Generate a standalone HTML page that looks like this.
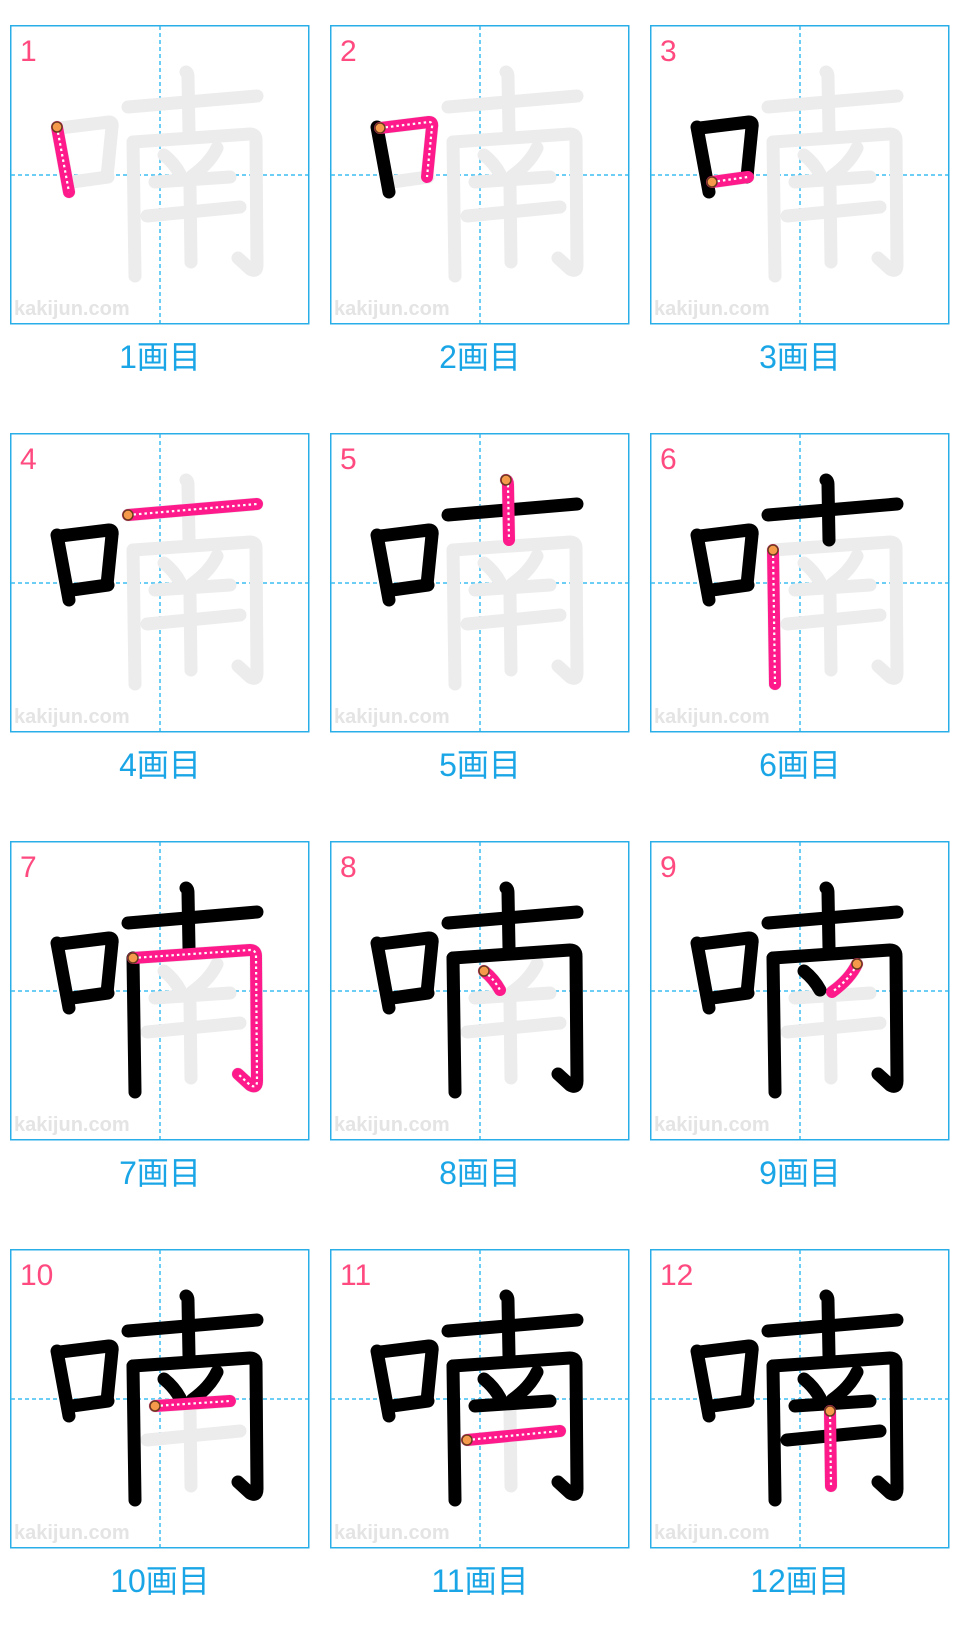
<!DOCTYPE html>
<html><head><meta charset="utf-8"><style>
html,body{margin:0;padding:0;background:#fff;width:960px;height:1632px;overflow:hidden}
svg{display:block}
.num{font-family:"Liberation Sans",sans-serif;font-size:30px;fill:#ff4a80}
.wm{font-family:"Liberation Sans",sans-serif;font-size:20px;fill:#e4e4e4;font-weight:bold}
.lab{font-family:"Liberation Sans","Noto Sans CJK JP",sans-serif;font-size:32px;fill:#1aa6e6}
</style></head><body>
<svg width="960" height="1632" viewBox="0 0 960 1632" xmlns="http://www.w3.org/2000/svg">
<defs>
<path id="s1" d="M47 102 L59 167"/>
<path id="s2" d="M50 103 L99 97 Q103 97 102 102 L97 152"/>
<path id="s3" d="M62 157 L98 152"/>
<path id="s4" d="M118 82 L247 71"/>
<path id="s5" d="M176 47 Q178 48 178 52 L179 107"/>
<path id="s6" d="M123 117 L125 251"/>
<path id="s7" d="M123 117 L240 109 Q246 109 246 115 L247 240 Q247 248 240 244 L228 233"/>
<path id="s8" d="M154 130 Q164 138 170 149"/>
<path id="s9" d="M207 123 Q200 138 182 151"/>
<path id="s10" d="M145 157 L220 152"/>
<path id="s11" d="M137 191 L230 182"/>
<path id="s12" d="M180 162 L181 237"/>
<g id="grid">
<rect x="0.75" y="0.75" width="298" height="298" fill="#fff" stroke="#2aaee8" stroke-width="1.5"/>
<line x1="150" y1="1" x2="150" y2="298" stroke="#3cbef0" stroke-width="1.5" stroke-dasharray="4,3"/>
<line x1="1" y1="150" x2="298" y2="150" stroke="#3cbef0" stroke-width="1.5" stroke-dasharray="4,3"/>
<text class="wm" x="4" y="290">kakijun.com</text>
</g>
<g id="gray" fill="none" stroke="#ececec" stroke-width="13" stroke-linecap="round" stroke-linejoin="round">
<use href="#s1"/><use href="#s2"/><use href="#s3"/><use href="#s4"/><use href="#s5"/><use href="#s6"/><use href="#s7"/><use href="#s8"/><use href="#s9"/><use href="#s10"/><use href="#s11"/><use href="#s12"/>
</g>
</defs>
<style>
.b{fill:none;stroke:#000;stroke-width:13;stroke-linecap:round;stroke-linejoin:round}
.p{fill:none;stroke:#ff1a8c;stroke-width:12;stroke-linecap:round;stroke-linejoin:round}
.d{fill:none;stroke:#fff;stroke-width:2.2;stroke-dasharray:2.5,3}
.o{fill:#f59a4a;stroke:#6a3a20;stroke-width:1.5}
</style>

<g transform="translate(10,25)"><use href="#grid"/><use href="#gray"/><text class="num" x="10" y="36">1</text>
<use href="#s1" class="p"/><use href="#s1" class="d"/><circle class="o" cx="47" cy="102" r="5"/></g>
<text class="lab" x="160" y="368" text-anchor="middle">1画目</text>
<g transform="translate(330,25)"><use href="#grid"/><use href="#gray"/><text class="num" x="10" y="36">2</text>
<use href="#s1" class="b"/>
<use href="#s2" class="p"/><use href="#s2" class="d"/><circle class="o" cx="50" cy="103" r="5"/></g>
<text class="lab" x="480" y="368" text-anchor="middle">2画目</text>
<g transform="translate(650,25)"><use href="#grid"/><use href="#gray"/><text class="num" x="10" y="36">3</text>
<use href="#s1" class="b"/><use href="#s2" class="b"/>
<use href="#s3" class="p"/><use href="#s3" class="d"/><circle class="o" cx="62" cy="157" r="5"/></g>
<text class="lab" x="800" y="368" text-anchor="middle">3画目</text>

<g transform="translate(10,433)"><use href="#grid"/><use href="#gray"/><text class="num" x="10" y="36">4</text>
<use href="#s1" class="b"/><use href="#s2" class="b"/><use href="#s3" class="b"/>
<use href="#s4" class="p"/><use href="#s4" class="d"/><circle class="o" cx="118" cy="82" r="5"/></g>
<text class="lab" x="160" y="776" text-anchor="middle">4画目</text>
<g transform="translate(330,433)"><use href="#grid"/><use href="#gray"/><text class="num" x="10" y="36">5</text>
<use href="#s1" class="b"/><use href="#s2" class="b"/><use href="#s3" class="b"/><use href="#s4" class="b"/>
<use href="#s5" class="p"/><use href="#s5" class="d"/><circle class="o" cx="176" cy="47" r="5"/></g>
<text class="lab" x="480" y="776" text-anchor="middle">5画目</text>
<g transform="translate(650,433)"><use href="#grid"/><use href="#gray"/><text class="num" x="10" y="36">6</text>
<use href="#s1" class="b"/><use href="#s2" class="b"/><use href="#s3" class="b"/><use href="#s4" class="b"/><use href="#s5" class="b"/>
<use href="#s6" class="p"/><use href="#s6" class="d"/><circle class="o" cx="123" cy="117" r="5"/></g>
<text class="lab" x="800" y="776" text-anchor="middle">6画目</text>

<g transform="translate(10,841)"><use href="#grid"/><use href="#gray"/><text class="num" x="10" y="36">7</text>
<use href="#s1" class="b"/><use href="#s2" class="b"/><use href="#s3" class="b"/><use href="#s4" class="b"/><use href="#s5" class="b"/><use href="#s6" class="b"/>
<use href="#s7" class="p"/><use href="#s7" class="d"/><circle class="o" cx="123" cy="117" r="5"/></g>
<text class="lab" x="160" y="1184" text-anchor="middle">7画目</text>
<g transform="translate(330,841)"><use href="#grid"/><use href="#gray"/><text class="num" x="10" y="36">8</text>
<use href="#s1" class="b"/><use href="#s2" class="b"/><use href="#s3" class="b"/><use href="#s4" class="b"/><use href="#s5" class="b"/><use href="#s6" class="b"/><use href="#s7" class="b"/>
<use href="#s8" class="p"/><use href="#s8" class="d"/><circle class="o" cx="154" cy="130" r="5"/></g>
<text class="lab" x="480" y="1184" text-anchor="middle">8画目</text>
<g transform="translate(650,841)"><use href="#grid"/><use href="#gray"/><text class="num" x="10" y="36">9</text>
<use href="#s1" class="b"/><use href="#s2" class="b"/><use href="#s3" class="b"/><use href="#s4" class="b"/><use href="#s5" class="b"/><use href="#s6" class="b"/><use href="#s7" class="b"/><use href="#s8" class="b"/>
<use href="#s9" class="p"/><use href="#s9" class="d"/><circle class="o" cx="207" cy="123" r="5"/></g>
<text class="lab" x="800" y="1184" text-anchor="middle">9画目</text>

<g transform="translate(10,1249)"><use href="#grid"/><use href="#gray"/><text class="num" x="10" y="36">10</text>
<use href="#s1" class="b"/><use href="#s2" class="b"/><use href="#s3" class="b"/><use href="#s4" class="b"/><use href="#s5" class="b"/><use href="#s6" class="b"/><use href="#s7" class="b"/><use href="#s8" class="b"/><use href="#s9" class="b"/>
<use href="#s10" class="p"/><use href="#s10" class="d"/><circle class="o" cx="145" cy="157" r="5"/></g>
<text class="lab" x="160" y="1592" text-anchor="middle">10画目</text>
<g transform="translate(330,1249)"><use href="#grid"/><use href="#gray"/><text class="num" x="10" y="36">11</text>
<use href="#s1" class="b"/><use href="#s2" class="b"/><use href="#s3" class="b"/><use href="#s4" class="b"/><use href="#s5" class="b"/><use href="#s6" class="b"/><use href="#s7" class="b"/><use href="#s8" class="b"/><use href="#s9" class="b"/><use href="#s10" class="b"/>
<use href="#s11" class="p"/><use href="#s11" class="d"/><circle class="o" cx="137" cy="191" r="5"/></g>
<text class="lab" x="480" y="1592" text-anchor="middle">11画目</text>
<g transform="translate(650,1249)"><use href="#grid"/><use href="#gray"/><text class="num" x="10" y="36">12</text>
<use href="#s1" class="b"/><use href="#s2" class="b"/><use href="#s3" class="b"/><use href="#s4" class="b"/><use href="#s5" class="b"/><use href="#s6" class="b"/><use href="#s7" class="b"/><use href="#s8" class="b"/><use href="#s9" class="b"/><use href="#s10" class="b"/><use href="#s11" class="b"/>
<use href="#s12" class="p"/><use href="#s12" class="d"/><circle class="o" cx="180" cy="162" r="5"/></g>
<text class="lab" x="800" y="1592" text-anchor="middle">12画目</text>
</svg>
</body></html>
